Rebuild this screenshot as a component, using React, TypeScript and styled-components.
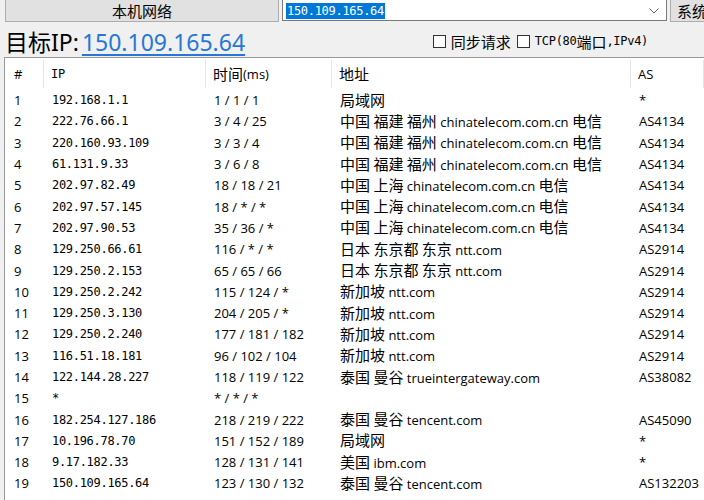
import styled, { createGlobalStyle } from "styled-components";

const GlobalStyle = createGlobalStyle`
  html, body {
    margin: 0;
    padding: 0;
    background: #f0f0f0;
    overflow: hidden;
  }
  body {
    font-family: "Open Sans", "Noto Sans CJK SC", sans-serif;
    color: #000;
  }
`;

const mono = `"DejaVu Sans Mono", "Noto Sans CJK SC", monospace`;

const Window = styled.div`
  width: 704px;
  height: 500px;
  overflow: hidden;
  background: #f0f0f0;
`;

const TopBar = styled.div`
  display: flex;
  align-items: flex-start;
  margin-top: -3px;
  padding-left: 5px;
  height: 25px;
`;

const PushButton = styled.button<{ $w?: number }>`
  box-sizing: border-box;
  width: ${(p) => (p.$w ? `${p.$w}px` : "auto")};
  height: 25px;
  padding: 3px 6px 0;
  margin: 0;
  background: #e1e1e1;
  border: 1px solid #adadad;
  font-family: "Noto Sans CJK SC", sans-serif;
  font-size: 15px;
  line-height: 20px;
  color: #000;
  white-space: nowrap;
  text-align: ${(p) => (p.$w ? "center" : "left")};
  flex-shrink: 0;
`;

const Combo = styled.div`
  box-sizing: border-box;
  width: 385px;
  height: 24px;
  margin-left: 3px;
  margin-right: 3px;
  background: #fff;
  border: 1px solid #7a7a7a;
  display: flex;
  align-items: center;
  justify-content: space-between;
  padding: 3px 7px 0 3px;
  flex-shrink: 0;
`;

const Selected = styled.span`
  background: #0078d7;
  color: #fff;
  font-family: ${mono};
  font-size: 12px;
  letter-spacing: -0.3px;
  line-height: 16px;
  padding: 0 1px;
`;

const Chevron = () => (
  <svg width="10" height="6" viewBox="0 0 10 6">
    <polyline points="0.5,0.5 5,5 9.5,0.5" fill="none" stroke="#606060" strokeWidth="1" />
  </svg>
);

const TargetRow = styled.div`
  display: flex;
  align-items: center;
  justify-content: space-between;
  height: 35px;
  padding-left: 5px;
`;

const Title = styled.div`
  font-family: "Noto Sans", "Noto Sans CJK SC", sans-serif;
  font-size: 23px;
  line-height: 28px;
  padding-top: 5px;
  white-space: nowrap;
`;

const Link = styled.span`
  color: #2677d6;
  text-decoration: underline;
  text-underline-offset: 3px;
  margin-left: 3px;
`;

const Options = styled.div`
  display: flex;
  align-items: center;
  padding-top: 3px;
  margin-right: 56px;
  font-family: "Noto Sans CJK SC", sans-serif;
  font-size: 15px;
  white-space: nowrap;
`;

const Check = styled.span`
  box-sizing: border-box;
  width: 13px;
  height: 13px;
  border: 1px solid #333;
  background: #fff;
  margin-right: 5px;
  margin-left: 6px;
`;

const Mono = styled.span`
  font-family: ${mono};
  font-size: 12px;
  letter-spacing: -0.3px;
`;

const Han = styled.span`
  font-family: "Noto Sans CJK SC", sans-serif;
  font-size: 15px;
`;

const ListView = styled.div`
  margin-left: 4px;
  border-top: 1px solid #999;
  border-left: 1px solid #999;
  background: #fff;
  height: 460px;
`;

const cols = "39px 162px 126px 299px 1fr";

const HeaderRow = styled.div`
  display: grid;
  grid-template-columns: ${cols};
  height: 31.5px;
  align-items: center;
`;

const HeadCell = styled.div<{ $first?: boolean }>`
  height: 28px;
  display: flex;
  align-items: center;
  padding-left: ${(p) => (p.$first ? 9 : 7)}px;
  border-right: 1px solid #e5e5e5;
  font-size: 13px;
  white-space: nowrap;
`;

const Row = styled.div`
  display: grid;
  grid-template-columns: ${cols};
  height: 21.3px;
  align-items: center;
`;

const Cell = styled.div<{ $first?: boolean; $mono?: boolean }>`
  padding-left: ${(p) => (p.$first ? 9 : 8)}px;
  font-family: ${(p) => (p.$mono ? mono : `"Open Sans", "Noto Sans CJK SC", sans-serif`)};
  font-size: ${(p) => (p.$mono ? "12px" : "13px")};
  letter-spacing: ${(p) => (p.$mono ? "-0.3px" : "0")};
  line-height: 20px;
  white-space: nowrap;
  overflow: hidden;
`;

// CJK runs are drawn larger than the latin text, as on the original form
const Mixed = ({ text }: { text: string }) => (
  <>
    {text
      .split(/([\u3000-\u9fff\uff00-\uffef]+)/)
      .filter(Boolean)
      .map((part, i) =>
        /[\u3000-\u9fff\uff00-\uffef]/.test(part) ? <Han key={i}>{part}</Han> : <span key={i}>{part}</span>
      )}
  </>
);

const telFz = "中国 福建 福州 chinatelecom.com.cn 电信";
const telSh = "中国 上海 chinatelecom.com.cn 电信";

const rows: string[][] = [
  ["1", "192.168.1.1", "1 / 1 / 1", "局域网", "*"],
  ["2", "222.76.66.1", "3 / 4 / 25", telFz, "AS4134"],
  ["3", "220.160.93.109", "3 / 3 / 4", telFz, "AS4134"],
  ["4", "61.131.9.33", "3 / 6 / 8", telFz, "AS4134"],
  ["5", "202.97.82.49", "18 / 18 / 21", telSh, "AS4134"],
  ["6", "202.97.57.145", "18 / * / *", telSh, "AS4134"],
  ["7", "202.97.90.53", "35 / 36 / *", telSh, "AS4134"],
  ["8", "129.250.66.61", "116 / * / *", "日本 东京都 东京 ntt.com", "AS2914"],
  ["9", "129.250.2.153", "65 / 65 / 66", "日本 东京都 东京 ntt.com", "AS2914"],
  ["10", "129.250.2.242", "115 / 124 / *", "新加坡 ntt.com", "AS2914"],
  ["11", "129.250.3.130", "204 / 205 / *", "新加坡 ntt.com", "AS2914"],
  ["12", "129.250.2.240", "177 / 181 / 182", "新加坡 ntt.com", "AS2914"],
  ["13", "116.51.18.181", "96 / 102 / 104", "新加坡 ntt.com", "AS2914"],
  ["14", "122.144.28.227", "118 / 119 / 122", "泰国 曼谷 trueintergateway.com", "AS38082"],
  ["15", "*", "* / * / *", "", ""],
  ["16", "182.254.127.186", "218 / 219 / 222", "泰国 曼谷 tencent.com", "AS45090"],
  ["17", "10.196.78.70", "151 / 152 / 189", "局域网", "*"],
  ["18", "9.17.182.33", "128 / 131 / 141", "美国 ibm.com", "*"],
  ["19", "150.109.165.64", "123 / 130 / 132", "泰国 曼谷 tencent.com", "AS132203"],
];

export default function App() {
  return (
    <Window>
      <GlobalStyle />
      <TopBar>
        <PushButton $w={274}>本机网络</PushButton>
        <Combo>
          <Selected>150.109.165.64</Selected>
          <Chevron />
        </Combo>
        <PushButton>系统设置</PushButton>
      </TopBar>
      <TargetRow>
        <Title>
          目标IP:<Link>150.109.165.64</Link>
        </Title>
        <Options>
          <Check />
          同步请求
          <Check />
          <Mono>TCP(80</Mono>端口<Mono>,IPv4)</Mono>
        </Options>
      </TargetRow>
      <ListView>
        <HeaderRow>
          <HeadCell $first>#</HeadCell>
          <HeadCell>
            <Mono>IP</Mono>
          </HeadCell>
          <HeadCell>
            <Mixed text="时间(ms)" />
          </HeadCell>
          <HeadCell>
            <Han>地址</Han>
          </HeadCell>
          <HeadCell>AS</HeadCell>
        </HeaderRow>
        {rows.map((r) => (
          <Row key={r[0]}>
            <Cell $first>{r[0]}</Cell>
            <Cell $mono>{r[1]}</Cell>
            <Cell>{r[2]}</Cell>
            <Cell>
              <Mixed text={r[3]} />
            </Cell>
            <Cell>{r[4]}</Cell>
          </Row>
        ))}
      </ListView>
    </Window>
  );
}
